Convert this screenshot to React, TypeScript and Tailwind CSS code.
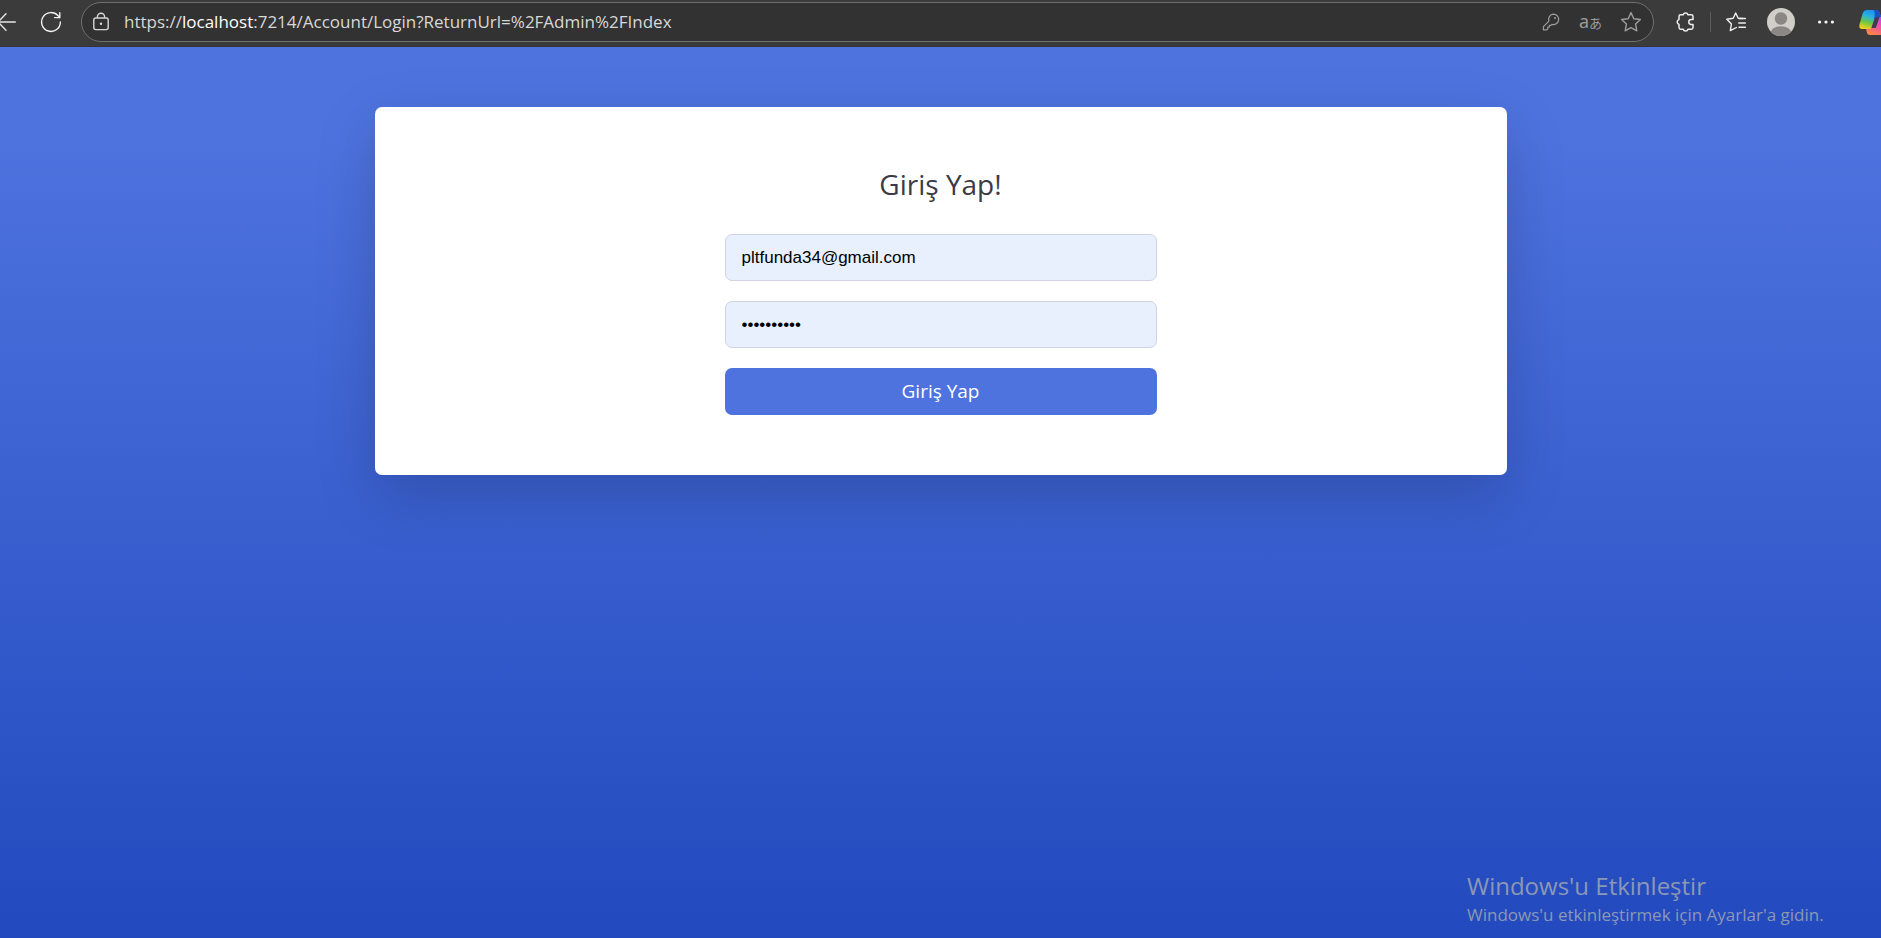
import React from "react";

function BackIcon() {
  return (
    <svg width="16" height="20" viewBox="0 0 16 20" fill="none" stroke="#e6e6e6" strokeWidth="1.4" strokeLinecap="round" strokeLinejoin="round" aria-hidden="true">
      <path d="M6 1.8 L-2 10 L6 18.2 M-2 10 H15.3" />
    </svg>
  );
}

function ReloadIcon() {
  return (
    <svg width="22" height="22" viewBox="0 0 22 22" fill="none" stroke="#f0f0f0" strokeWidth="1.4" strokeLinecap="round" strokeLinejoin="round" aria-hidden="true">
      <path d="M20.4 11 A9.4 9.4 0 1 1 17.9 4.6 L19.6 6.4" />
      <path d="M19.8 1.6 V6.6 H14.6" />
    </svg>
  );
}

function LockIcon() {
  return (
    <svg width="18" height="20" viewBox="0 0 18 20" fill="none" stroke="#d6d6d6" strokeWidth="1.4" aria-hidden="true">
      <rect x="1.8" y="6" width="14.4" height="11.6" rx="2" />
      <path d="M5.4 6 V4.8 A3.6 3.6 0 0 1 12.6 4.8 V6" />
      <circle cx="9" cy="11.8" r="1.2" fill="#d6d6d6" stroke="none" />
    </svg>
  );
}

function KeyIcon() {
  return (
    <svg width="20" height="20" viewBox="0 0 20 20" fill="none" stroke="#9c9c9c" strokeWidth="1.2" strokeLinejoin="round" aria-hidden="true">
      <path d="M12.4 2.2 A5.2 5.2 0 1 1 11 12.4 L9.9 13.4 H8.4 V15 H6.8 V16.8 L5.8 17.8 H2.4 V14.7 L7.9 9.2 A5.2 5.2 0 0 1 12.4 2.2 Z" />
      <circle cx="14" cy="6" r="1" fill="#9c9c9c" stroke="none" />
    </svg>
  );
}

function StarIcon() {
  return (
    <svg width="22" height="22" viewBox="0 0 22 22" fill="none" stroke="#9c9c9c" strokeWidth="1.4" strokeLinejoin="round" aria-hidden="true">
      <path d="M11 1.6 L13.8 7.7 L20.4 8.5 L15.6 13.1 L16.8 19.8 L11 16.6 L5.2 19.8 L6.4 13.1 L1.6 8.5 L8.2 7.7 Z" />
    </svg>
  );
}

function PuzzleIcon() {
  return (
    <svg width="20" height="22" viewBox="0 0 20 22" fill="none" stroke="#ededed" strokeWidth="1.5" strokeLinejoin="round" aria-hidden="true">
      <path d="M8.2 3.8 A2.5 2.5 0 0 1 13 3.8 H16.4 A1.6 1.6 0 0 1 18 5.4 V8.6 H16.2 A2.4 2.4 0 0 0 16.2 13.4 H18 V16.6 A1.6 1.6 0 0 1 16.4 18.2 H13 A2.5 2.5 0 0 1 8.2 18.2 H5.6 A1.6 1.6 0 0 1 4 16.6 V13.4 A2.5 2.5 0 0 1 4 8.6 V5.4 A1.6 1.6 0 0 1 5.6 3.8 Z" />
    </svg>
  );
}

function FavoritesIcon() {
  return (
    <svg width="22" height="22" viewBox="0 0 22 22" fill="none" stroke="#f0f0f0" strokeWidth="1.4" strokeLinecap="round" strokeLinejoin="round" aria-hidden="true">
      <path d="M17.5 7.5 L13.2 7.2 L10.7 2 L8.2 7.3 L1.8 8.3 L6.4 13 L5.3 19.6 L11.4 16.5" />
      <path d="M14 7.5 H20.4 M13.8 12 H20.4 M14 16.2 H20.4" />
    </svg>
  );
}

function Avatar() {
  return (
    <svg width="28" height="28" viewBox="0 0 28 28" aria-hidden="true">
      <defs>
        <clipPath id="avatar-clip">
          <circle cx="14" cy="14" r="14" />
        </clipPath>
      </defs>
      <g clipPath="url(#avatar-clip)">
        <rect width="28" height="28" fill="#d0cec9" />
        <circle cx="14" cy="10.5" r="6.2" fill="#8b8784" />
        <ellipse cx="14" cy="25" rx="10.5" ry="6.8" fill="#8b8784" />
      </g>
    </svg>
  );
}

function MoreIcon() {
  return (
    <svg width="18" height="6" viewBox="0 0 18 6" fill="#f5f5f5" aria-hidden="true">
      <circle cx="2.6" cy="3" r="1.6" />
      <circle cx="9" cy="3" r="1.6" />
      <circle cx="15.4" cy="3" r="1.6" />
    </svg>
  );
}

function CopilotIcon() {
  return (
    <svg width="30" height="27" viewBox="0 0 30 27" className="shrink-0" aria-hidden="true">
      <defs>
        <linearGradient id="cp-left" x1="0.6" y1="0" x2="0.25" y2="1">
          <stop offset="0" stopColor="#1d8cf0" />
          <stop offset="0.35" stopColor="#27b4e0" />
          <stop offset="0.65" stopColor="#6cc644" />
          <stop offset="1" stopColor="#f8d51c" />
        </linearGradient>
        <linearGradient id="cp-right" x1="0.7" y1="0" x2="0.2" y2="1">
          <stop offset="0" stopColor="#b14df0" />
          <stop offset="0.5" stopColor="#f0569c" />
          <stop offset="1" stopColor="#ff8a3c" />
        </linearGradient>
      </defs>
      <path d="M12 8 H25 Q29 8 28 12 L26 22 Q25 26 21 26 H11 Q8 26 7.5 22 L7 19 Q11 19 12.5 15 Z" fill="url(#cp-right)" />
      <path d="M8 1 H17 Q20 1 21 5 L22 8 H19 Q16 8 15 11 L12.5 18.5 Q12 20 10 20 H3 Q-.5 20 .6 15 L3.5 5 Q4.6 1 8 1 Z" fill="url(#cp-left)" />
      <path d="M15 1 H17 Q20 1 21 5 L22 8 H18.5 Q16 8 15 10.4 Q16.5 4 15 1 Z" fill="#1c50c8" />
      <path d="M15.7 9.2 Q16.5 8 18.5 8 H20.5 L16.8 19 H12.4 Z" fill="#453a50" />
    </svg>
  );
}

function BrowserBar() {
  return (
    <header className="flex h-[47px] items-start overflow-hidden border-b border-[#343434] bg-[#3b3b3b] pt-[2px]">
      <div className="flex h-10 w-full items-center">
        <button type="button" aria-label="Back" className="shrink-0">
          <BackIcon />
        </button>
        <button type="button" aria-label="Reload" className="ml-6 shrink-0">
          <ReloadIcon />
        </button>
        <div className="ml-[19px] flex h-10 min-w-0 flex-1 items-center rounded-full border border-[#707070] bg-[#323232] pr-[11px] pl-[10px]">
          <button type="button" aria-label="Site information" className="shrink-0">
            <LockIcon />
          </button>
          <div className="ml-[14px] min-w-0 flex-1 truncate text-[17px] leading-6 text-[#d8d8d8]">
            https://<span className="text-white">localhost</span>:7214/Account/Login?ReturnUrl=%2FAdmin%2FIndex
          </div>
          <div className="flex shrink-0 items-center gap-[18px]">
            <button type="button" aria-label="Passwords">
              <KeyIcon />
            </button>
            <button
              type="button"
              aria-label="Translate"
              className="flex items-baseline leading-5 text-[#9c9c9c] font-['Noto_Sans','Noto_Sans_CJK_JP',sans-serif]"
            >
              <span className="text-[18px]">a</span>
              <span className="text-[13px]">あ</span>
            </button>
            <button type="button" aria-label="Add to favorites">
              <StarIcon />
            </button>
          </div>
        </div>
        <button type="button" aria-label="Extensions" className="ml-[21px] shrink-0">
          <PuzzleIcon />
        </button>
        <div className="ml-[15px] h-5 w-px shrink-0 bg-[#5c5c5c]" />
        <button type="button" aria-label="Favorites" className="ml-[14px] shrink-0">
          <FavoritesIcon />
        </button>
        <button type="button" aria-label="Profile" className="ml-5 shrink-0">
          <Avatar />
        </button>
        <button type="button" aria-label="Settings and more" className="ml-[22px] shrink-0">
          <MoreIcon />
        </button>
        <button type="button" aria-label="Copilot" className="ml-6 w-[22px] shrink-0 overflow-hidden">
          <CopilotIcon />
        </button>
      </div>
    </header>
  );
}

const fieldClass =
  "h-[47px] w-full rounded-[7px] border border-[#d1d3e2] bg-[#e8f0fe] px-4 text-[17px] text-black font-['Liberation_Sans',Arial,sans-serif] outline-none";

function LoginForm() {
  return (
    <form className="mx-auto flex w-full max-w-[432px] flex-col gap-5" onSubmit={(e) => e.preventDefault()}>
      <input type="email" aria-label="E-posta" defaultValue="pltfunda34@gmail.com" className={fieldClass} />
      <input type="password" aria-label="Şifre" defaultValue="0123456789" className={fieldClass} />
      <button type="submit" className="h-[47px] w-full rounded-[7px] bg-[#4e73df] pb-0.5 text-[19px] leading-6 text-white">
        Giriş Yap
      </button>
    </form>
  );
}

export default function App() {
  return (
    <div className="flex min-h-screen flex-col font-['Open_Sans',sans-serif]">
      <BrowserBar />
      <main className="flex flex-1 flex-col justify-between bg-linear-[180deg,#4e73df_10%,#224abe_100%] pt-[60px]">
        <section className="mx-auto w-full max-w-[1132px] rounded-[7px] bg-white px-6 py-[60px] shadow-[0_20px_60px_rgba(0,0,0,0.175)]">
          <h1 className="mb-[33px] text-center text-[28px] leading-[34px] font-normal text-[#3a3b45]">Giriş Yap!</h1>
          <LoginForm />
        </section>
        <aside className="ml-auto w-[414px] pb-[11px] text-[#8c98b4]">
          <p className="text-[24px] leading-[34px]">Windows'u Etkinleştir</p>
          <p className="text-[17px] leading-6">Windows'u etkinleştirmek için Ayarlar'a gidin.</p>
        </aside>
      </main>
    </div>
  );
}
